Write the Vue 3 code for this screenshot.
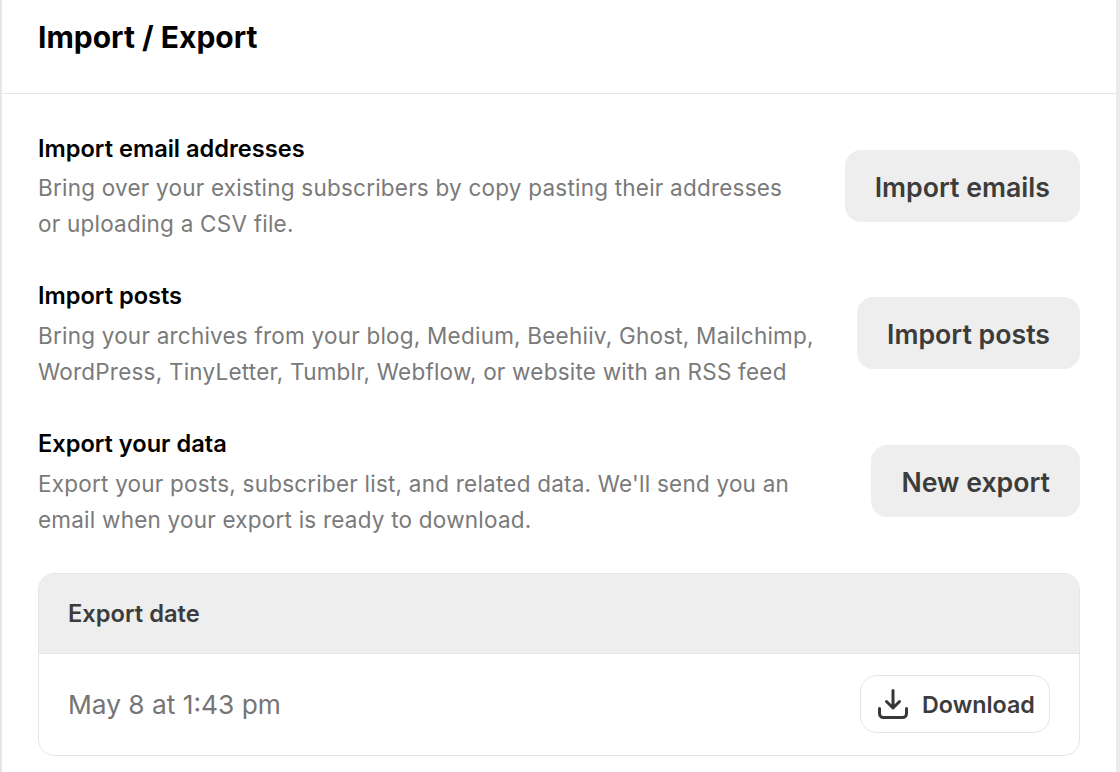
<script setup>
const rows = [
  { title: 'Import email addresses', lines: ['Bring over your existing subscribers by copy pasting their addresses', 'or uploading a CSV file.'], action: 'Import emails' },
  { title: 'Import posts', lines: ['Bring your archives from your blog, Medium, Beehiiv, Ghost, Mailchimp,', 'WordPress, TinyLetter, Tumblr, Webflow, or website with an RSS feed'], action: 'Import posts' },
  { title: 'Export your data', lines: ["Export your posts, subscriber list, and related data. We'll send you an", 'email when your export is ready to download.'], action: 'New export' }
]
</script>

<template>
  <div class="page">
    <header class="head"><h1>Import / Export</h1></header>
    <main class="body">
      <section v-for="r in rows" :key="r.title" class="row">
        <div class="info">
          <h2>{{ r.title }}</h2>
          <p v-for="l in r.lines" :key="l">{{ l }}</p>
        </div>
        <button class="btn">{{ r.action }}</button>
      </section>
      <div class="table">
        <div class="thead">Export date</div>
        <div class="tbody">
          <span class="date">May 8 at 1:43 pm</span>
          <button class="dl">
            <svg width="32" height="32" viewBox="0 0 32 32" fill="none" stroke="#363737" stroke-width="3" stroke-linecap="round" stroke-linejoin="round">
              <path d="M16 2.5V20M9.5 13.5L16 20L22.5 13.5M2.5 20.5v5a4 4 0 0 0 4 4h19a4 4 0 0 0 4-4v-5"/>
            </svg>
            Download
          </button>
        </div>
      </div>
    </main>
  </div>
</template>

<style>
html, body { margin: 0; background: #fff; overflow: hidden; }
</style>
<style scoped>
.page { width: 1120px; height: 772px; box-sizing: border-box; border-left: 2px solid #e6e6e6; border-right: 4px solid #ebebeb; font-family: Inter, "Liberation Sans", sans-serif; color: #000; overflow: hidden; }
.head { height: 94px; box-sizing: border-box; border-bottom: 1px solid #e6e6e6; padding: 17px 36px 0; }
h1 { margin: 0; font-size: 30px; line-height: 40px; font-weight: 650; }
.body { padding: 36px 36px 0 36px; display: flex; flex-direction: column; }
.row { display: flex; justify-content: space-between; align-items: center; height: 112px; margin-bottom: 35.9px; }
.info { height: 112px; box-sizing: border-box; padding-top: 2.6px; }
h2 { margin: 0 0 5.4px; font-size: 23.6px; line-height: 32px; font-weight: 560; }
p { margin: 0; font-size: 22.5px; line-height: 36px; color: #7a7a7a; letter-spacing: 0.22px; }
.btn { height: 72px; padding: 2px 30px 0; margin-bottom: 1px; border: 0; border-radius: 16px; background: #eeeeee; color: #3c3c3c; font: 600 26.7px Inter, "Liberation Sans", sans-serif; }
.table { border: 1px solid #e6e6e6; border-radius: 16px; overflow: hidden; margin-top: -1.1px; }
.thead { height: 80px; box-sizing: border-box; background: #eeeeee; border-bottom: 1px solid #e6e6e6; display: flex; align-items: center; padding: 0 29px; font-size: 23.7px; font-weight: 560; color: #3c3c3c; }
.tbody { height: 101px; display: flex; justify-content: space-between; align-items: center; padding: 0 29px; }
.date { font-size: 26.3px; color: #757575; padding-top: 1px; }
.dl { height: 58px; width: 190px; display: flex; align-items: center; justify-content: flex-start; gap: 13px; background: #fff; border: 1px solid #e6e6e6; border-radius: 16px; color: #3c3c3c; font: 600 23.3px Inter, "Liberation Sans", sans-serif; padding: 0 0 0 16px; }
</style>
